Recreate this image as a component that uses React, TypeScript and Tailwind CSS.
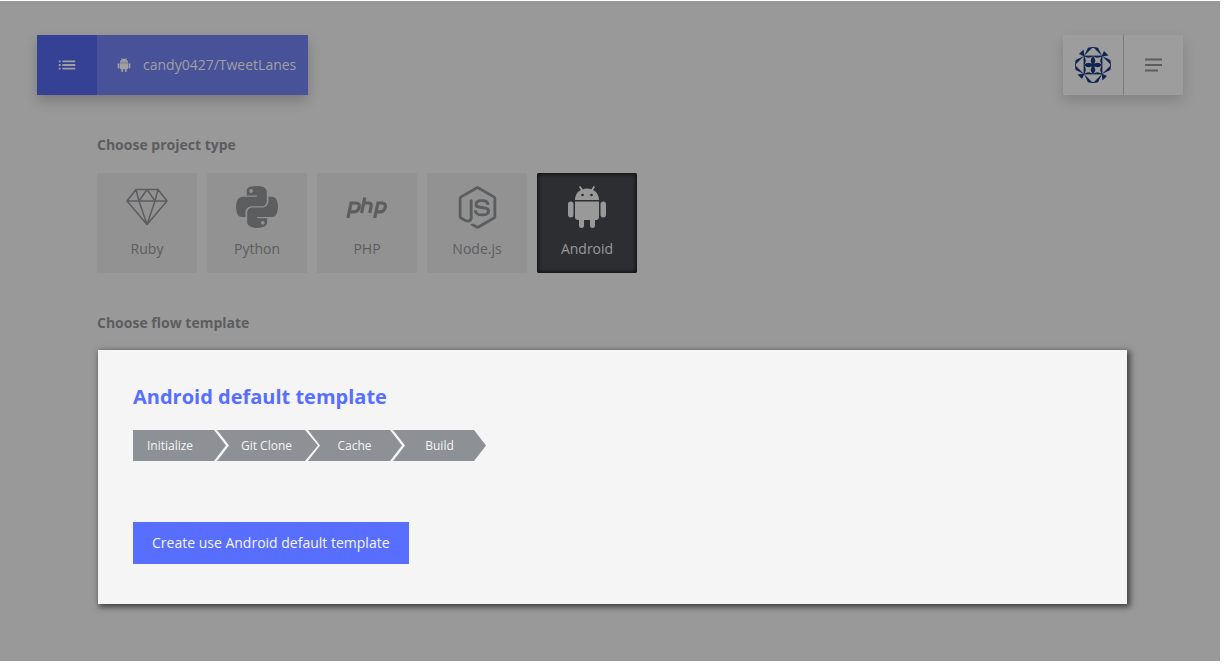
import React from "react";
import { FaPython, FaNodeJs } from "react-icons/fa";
import { MdList } from "react-icons/md";

function RubyIcon() {
  return (
    <svg viewBox="0 0 42 38" className="h-[38px] w-[42px]" fill="none" stroke="currentColor" strokeWidth="1.5" strokeLinejoin="round">
      <path d="M10 1.500h22L41 13 21 36.500 1 13zM1 13h40M10 1.500 13 13 21 1.500 29 13l3-11.500M13 13l8 23.500L29 13" />
    </svg>
  );
}

function PhpIcon() {
  return (
    <svg viewBox="0 0 42 22" className="mt-0.5 h-[22px] w-[42px]" fill="none" stroke="currentColor" strokeWidth="3.2">
      <path d="M1.900 21 5.100 6h4.600c3.200 0 4.100 1.500 3.500 4.300-.7 3.100-2.500 4.500-5.800 4.500H3.500" />
      <path d="M18.800.5 15.600 16M18 6h4.200c2.600 0 3.400.8 2.900 3.300L23.800 16" />
      <path d="M28.700 21 31.900 6h3.800c3.200 0 4.100 1.500 3.500 4.300-.7 3.100-2.500 4.500-5.800 4.500H30" />
    </svg>
  );
}

function AndroidIcon({ className, eyes }: { className: string; eyes: string }) {
  return (
    <svg viewBox="0 0 38 42" className={className} fill="currentColor">
      <path d="M7 14C7 9 9.500 5.500 13 3.900L10.800.9l1.600-.9 2.300 3.200c2.800-.8 5.800-.8 8.600 0L25.600 0l1.600.9-2.200 3C28.500 5.500 31 9 31 14z" />
      <circle cx="14.500" cy="9" r="1.300" className={eyes} />
      <circle cx="23.500" cy="9" r="1.300" className={eyes} />
      <path d="M7 15.500h24V31q0 3-3 3h-1v5.500a2.500 2.500 0 0 1-5 0V34h-6v5.500a2.500 2.500 0 0 1-5 0V34h-1q-3 0-3-3z" />
      <rect x="0" y="15.500" width="5.500" height="16" rx="2.700" />
      <rect x="32.500" y="15.500" width="5.500" height="16" rx="2.700" />
    </svg>
  );
}

function Avatar() {
  return (
    <svg viewBox="-18 -18 36 36" className="size-9 text-[#0f2450]" fill="currentColor" role="img" aria-label="Account">
      {[0, 90, 180, 270].map((angle) => (
        <g key={angle} transform={`rotate(${angle})`}>
          <path d="M-5-17.300Q0-18.500 5-17.300L9-9 1-17H-1L-9-9z" />
          <path d="M-14-11-9.500-15.500-8.500-8.500z" />
          <path d="M0 0Q4.500-4.500 9 0zM0-9Q4.500-5.500 9-9zM0 0Q4.500-4.500 0-9zM9 0Q5.500-4.500 9-9z" />
        </g>
      ))}
      <path d="M0-3 3 0 0 3-3 0z" />
      <rect x="-9" y="-9" width="18" height="18" fill="none" stroke="currentColor" strokeWidth="0.800" />
    </svg>
  );
}

function MenuIcon() {
  return (
    <svg viewBox="0 0 17 14" className="h-[14px] w-[17px]" fill="none" stroke="currentColor" strokeWidth="2">
      <path d="M0 1.500h17M0 7h17M0 12.500h13" />
    </svg>
  );
}

const projectTypes = [
  { name: "Ruby", icon: <RubyIcon /> },
  { name: "Python", icon: <FaPython className="size-12" /> },
  { name: "PHP", icon: <PhpIcon /> },
  { name: "Node.js", icon: <FaNodeJs className="size-[43px]" /> },
  { name: "Android", icon: <AndroidIcon className="h-[42px] w-[38px]" eyes="fill-[#2d2e32]" /> },
];

const steps = [
  { name: "Initialize", shape: "w-24 pr-[22px] [clip-path:polygon(0_0,81px_0,93px_50%,81px_100%,0_100%)]" },
  { name: "Git Clone", shape: "w-[103px] -ml-3 pr-1 [clip-path:polygon(0_0,88px_0,101px_50%,88px_100%,0_100%,12px_50%)]" },
  { name: "Cache", shape: "w-[97px] -ml-3 pr-1 [clip-path:polygon(0_0,82px_0,94px_50%,82px_100%,0_100%,12px_50%)]" },
  { name: "Build", shape: "w-[93px] -ml-3 [clip-path:polygon(0_0,81px_0,93px_50%,81px_100%,0_100%,12px_50%)]" },
];

export default function App() {
  return (
    <div className="min-h-screen bg-white pt-px pr-1.5 pb-[5px] font-['Open_Sans','Noto_Sans',sans-serif]">
      <div className="min-h-[660px] bg-[#999] px-[37px] pt-[34px] pb-14 text-[#5c5d5f]">
        <header className="flex justify-between">
          <div className="flex h-15 text-[#a0a0a0] shadow-[0_6px_12px_rgba(0,0,0,0.2)]">
            <button type="button" aria-label="Project list" className="flex w-15 items-center justify-center bg-[#354195]">
              <MdList className="size-[22px]" />
            </button>
            <a href="#project" className="flex items-center gap-3 bg-[#475299] pr-3 pl-5 text-sm">
              <AndroidIcon className="h-3.5 w-3.5" eyes="fill-[#475299]" />
              candy0427/TweetLanes
            </a>
          </div>
          <div className="flex h-15 bg-[#9d9d9d] shadow-[0_6px_12px_rgba(0,0,0,0.15)]">
            <button type="button" aria-label="Account" className="flex w-[60px] items-center justify-center">
              <Avatar />
            </button>
            <button type="button" aria-label="Menu" className="flex w-15 items-center justify-center border-l border-[#7b7b7b]">
              <MenuIcon />
            </button>
          </div>
        </header>

        <main className="px-[60px] pt-10 pr-[56px]">
          <h2 className="text-sm leading-5 font-bold">Choose project type</h2>
          <div className="mt-[18px] flex gap-2.5">
            {projectTypes.map(({ name, icon }) => (
              <button
                key={name}
                type="button"
                aria-pressed={name === "Android"}
                className="flex size-25 flex-col items-center rounded-xs bg-[#929292] pt-2.5 text-sm leading-5 aria-pressed:bg-[#2d2e32] aria-pressed:text-[#999] aria-pressed:shadow-[inset_0_0_5px_#000]"
              >
                <span className="flex h-12 items-center justify-center">{icon}</span>
                <span className="mt-2">{name}</span>
              </button>
            ))}
          </div>

          <h2 className="mt-10 text-sm leading-5 font-bold">Choose flow template</h2>
          <section className="mt-[17px] ml-px bg-[#f5f5f5] px-[35px] pt-8 pb-10 shadow-[2px_2px_6px_1px_rgba(0,0,0,0.6)]">
            <h3 className="text-xl leading-[30px] font-bold text-[#576eff]">Android default template</h3>
            <ol className="mt-[18px] flex text-xs text-[#f5f5f5]">
              {steps.map(({ name, shape }) => (
                <li key={name} className={`flex h-[31px] items-center justify-center bg-[#8d9095] ${shape}`}>
                  {name}
                </li>
              ))}
            </ol>
            <button type="button" className="mt-[61px] block h-[42px] bg-[#576eff] px-[19px] text-sm text-[#f5f5f5]">
              Create use Android default template
            </button>
          </section>
        </main>
      </div>
    </div>
  );
}
